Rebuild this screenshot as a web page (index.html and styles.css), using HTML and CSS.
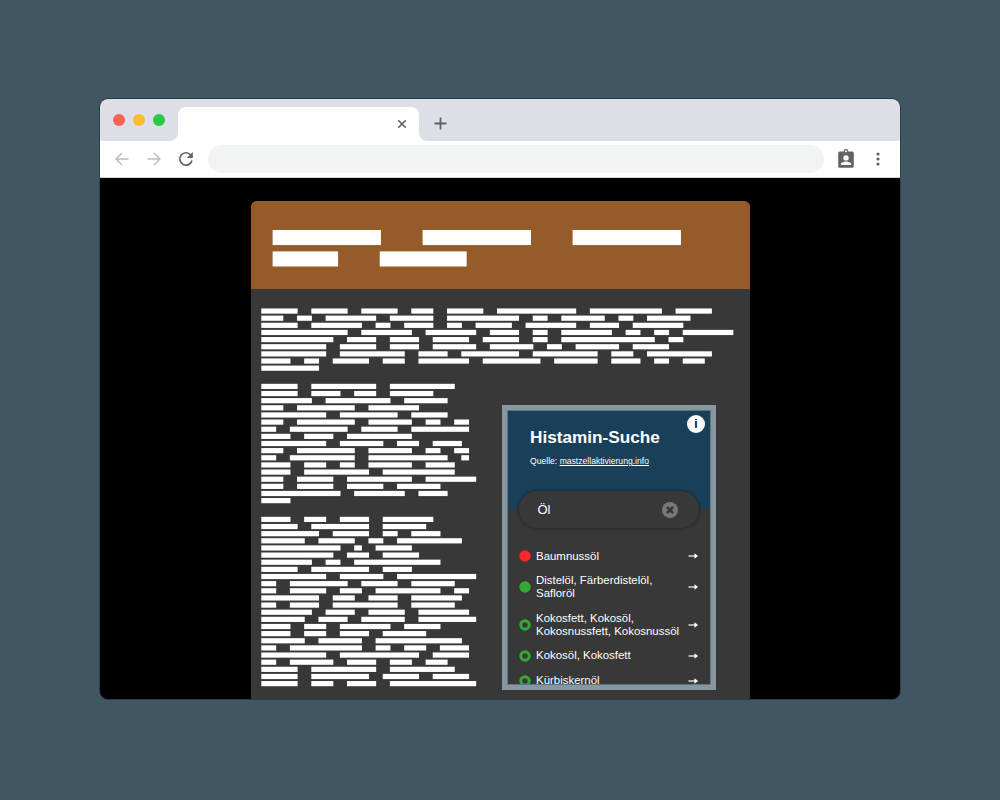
FILE: index.html
```html
<!DOCTYPE html>
<html lang="de">
<head>
<meta charset="utf-8">
<title>Histamin-Suche</title>
<link rel="stylesheet" href="styles.css">
</head>
<body>
<main class="window">
  <div class="tabbar">
    <div class="lights"><i class="light red"></i><i class="light yellow"></i><i class="light green"></i></div>
    <div class="tab"><svg width="10" height="10" viewBox="0 0 10 10"><path d="M1.200 1.200 8.800 8.800M8.800 1.200 1.200 8.800" stroke="#5f6368" stroke-width="1.600"/></svg></div>
    <svg class="plus" width="13" height="13" viewBox="0 0 13 13"><path d="M6.500 .5V12.500M.5 6.500H12.500" stroke="#5f6368" stroke-width="1.800"/></svg>
  </div>
  <div class="toolbar">
    <svg class="back" width="14" height="14" viewBox="0 0 14 14"><path d="M13.500 7H1.500M7 1 1 7l6 6" fill="none" stroke="#babcbe" stroke-width="1.500"/></svg>
    <svg class="forward" width="14" height="14" viewBox="0 0 14 14"><path d="M.5 7h12M7 1l6 6-6 6" fill="none" stroke="#babcbe" stroke-width="1.500"/></svg>
    <svg class="reload" width="16" height="16" viewBox="0 0 16 16"><path d="M12.800 4A6.200 6.200 0 1 0 14 9.600" fill="none" stroke="#5f6368" stroke-width="1.700"/><path d="M14.800 1v6.100H8.700z" fill="#5f6368"/></svg>
    <div class="address"></div>
    <svg class="badge" width="16" height="19" viewBox="0 0 16 19"><path fill="#5f6368" fill-rule="evenodd" d="M1.800 2.400H5.600a2.400 2.400 0 0 1 4.800 0h3.800q1.600 0 1.600 1.600v13.200q0 1.600-1.600 1.600H1.800q-1.600 0-1.600-1.600V4q0-1.600 1.600-1.600zM8 1.200a1.100 1.100 0 1 0 0 2.200a1.100 1.100 0 1 0 0-2.200zM8 6.200a2.700 2.700 0 1 0 0 5.400a2.700 2.700 0 1 0 0-5.400zM2.900 15.900h10.200v-.9c0-1.500-3.200-2.500-5.100-2.500s-5.100 1-5.100 2.500z"/></svg>
    <svg class="menu" width="4" height="14" viewBox="0 0 4 14"><g fill="#5f6368"><circle cx="2" cy="2" r="1.600"/><circle cx="2" cy="7" r="1.600"/><circle cx="2" cy="12" r="1.600"/></g></svg>
  </div>
  <div class="page">
    <article class="card">
      <header class="card-head"><svg class="title-lines" data-lines="title"></svg></header>
      <svg class="para intro" data-lines="intro"></svg>
      <div class="columns">
        <div class="copy">
          <svg class="para first" data-lines="first"></svg>
          <svg class="para second" data-lines="second"></svg>
        </div>
        <aside class="widget">
          <div class="widget-head">
            <h1>Histamin-Suche</h1>
            <p class="source">Quelle: <a>mastzellaktivierung.info</a></p>
            <span class="info">i</span>
          </div>
          <div class="search"><span>Öl</span>
            <svg width="16" height="16" viewBox="0 0 16 16"><circle cx="8" cy="8" r="8" fill="#797979"/><path d="M4.900 4.900l6.200 6.200M11.100 4.900l-6.200 6.200" stroke="#383838" stroke-width="2.600"/></svg>
          </div>
          <ul class="results">
            <li><svg class="dot" viewBox="0 0 12 12"><circle cx="6" cy="6" r="5.700" fill="#fa2828"/></svg><span>Baumnussöl</span><svg class="arrow" viewBox="0 0 10 6"><path d="M.5 3h7" stroke="#fff" stroke-width="1.200"/><path d="M6.500 .3 10 3 6.500 5.700z" fill="#fff"/></svg></li>
            <li><svg class="dot" viewBox="0 0 12 12"><circle cx="6" cy="6" r="5.700" fill="#35a835"/></svg><span>Distelöl, Färberdistelöl,<br>Safloröl</span><svg class="arrow" viewBox="0 0 10 6"><path d="M.5 3h7" stroke="#fff" stroke-width="1.200"/><path d="M6.500 .3 10 3 6.500 5.700z" fill="#fff"/></svg></li>
            <li><svg class="dot" viewBox="0 0 12 12"><circle cx="6" cy="6" r="4.200" fill="none" stroke="#35a835" stroke-width="3"/></svg><span>Kokosfett, Kokosöl,<br>Kokosnussfett, Kokosnussöl</span><svg class="arrow" viewBox="0 0 10 6"><path d="M.5 3h7" stroke="#fff" stroke-width="1.200"/><path d="M6.500 .3 10 3 6.500 5.700z" fill="#fff"/></svg></li>
            <li><svg class="dot" viewBox="0 0 12 12"><circle cx="6" cy="6" r="4.200" fill="none" stroke="#35a835" stroke-width="3"/></svg><span>Kokosöl, Kokosfett</span><svg class="arrow" viewBox="0 0 10 6"><path d="M.5 3h7" stroke="#fff" stroke-width="1.200"/><path d="M6.500 .3 10 3 6.500 5.700z" fill="#fff"/></svg></li>
            <li><svg class="dot" viewBox="0 0 12 12"><circle cx="6" cy="6" r="4.200" fill="none" stroke="#35a835" stroke-width="3"/></svg><span>Kürbiskernöl</span><svg class="arrow" viewBox="0 0 10 6"><path d="M.5 3h7" stroke="#fff" stroke-width="1.200"/><path d="M6.500 .3 10 3 6.500 5.700z" fill="#fff"/></svg></li>
          </ul>
        </aside>
      </div>
    </article>
  </div>
</main>
<script src="lines.js"></script>
</body>
</html>
```
FILE: styles.css
```css
* { box-sizing: border-box; }
body { margin: 0; height: 800px; padding: 99px 100px; background: #405663; overflow: hidden; font-family: "Liberation Sans", Arial, sans-serif; }
svg { display: block; flex: none; }
.window { width: 800px; height: 600px; border-radius: 8px; overflow: hidden; background: #000; box-shadow: 0 0 0 1px #2c3b45; display: flex; flex-direction: column; }
.tabbar { height: 42px; flex: none; background: #dddfe7; display: flex; align-items: flex-start; }
.lights { display: flex; gap: 8px; padding: 15.400px 0 0 13px; width: 78px; }
.light { width: 12px; height: 12px; border-radius: 50%; }
.red { background: #ff5f57; }
.yellow { background: #ffbd2e; }
.green { background: #28ca41; }
.tab { position: relative; width: 241px; height: 34px; margin-top: 8px; background: #fff; border-radius: 8px 8px 0 0; display: flex; align-items: center; justify-content: flex-end; padding-right: 12px; }
.tab::before, .tab::after { content: ""; position: absolute; bottom: 0; width: 8px; height: 8px; }
.tab::before { left: -8px; background: radial-gradient(circle at 0 0, transparent 7.500px, #fff 8.200px); }
.tab::after { right: -8px; background: radial-gradient(circle at 100% 0, transparent 7.500px, #fff 8.200px); }
.plus { margin: 18px 0 0 15px; }
.toolbar { height: 37px; flex: none; background: #fff; display: flex; align-items: center; border-bottom: 1px solid #d4d6d8; }
.back { margin-left: 15px; }
.forward { margin-left: 18px; }
.reload { margin-left: 17px; }
.address { width: 616px; height: 28px; margin-left: 14px; border-radius: 14px; background: #f1f3f4; }
.badge { margin: 0 0 2px 14px; }
.menu { margin-left: 22px; }
.page { flex: 1; min-height: 0; padding: 23px 150px 0 151px; overflow: hidden; }
.card { height: 520px; background: #383838; border-radius: 6px 6px 0 0; overflow: hidden; }
.card-head { height: 88px; background: #955b29; padding: 29px 0 0 21px; }
.title-lines { width: 420px; height: 40px; }
.para { width: 480px; overflow: visible; margin-left: 10px; }
.intro { height: 65px; margin-top: 19px; }
.columns { display: flex; height: 330px; }
.copy { width: 251px; }
.copy .para { width: 220px; }
.first { height: 122px; margin-top: 10px; }
.second { height: 172px; margin-top: 11px; }
.widget { position: relative; width: 214px; height: 285px; margin-top: 32px; border: 5px solid #87979f; background: #383838; overflow: hidden; padding: 1px; }
.widget-head { height: 98px; background: #1a4059; padding: 16px 0 0 22px; color: #fff; }
h1 { margin: 0; font-size: 17.200px; line-height: 20px; }
.source { margin: 9px 0 0; font-size: 8.600px; line-height: 10px; white-space: nowrap; }
.source a { text-decoration: underline; text-underline-offset: 1px; }
.info { position: absolute; right: 6px; top: 5px; width: 18px; height: 18px; border-radius: 50%; background: #fff; color: #111; font: bold 12px/18px "Liberation Sans", Arial, sans-serif; text-align: center; }
.search { position: relative; width: 180px; height: 37px; margin: -18px 0 0 11px; border-radius: 19px; background: #383838; box-shadow: 0 0 4px rgba(0,0,0,.45); display: flex; align-items: center; justify-content: space-between; padding: 0 21px 0 18.500px; color: #fff; font-size: 13px; }
.results { list-style: none; margin: 21.500px 0 0; padding: 0 12px 0 10.500px; color: #fff; font-size: 11.450px; line-height: 12.800px; display: flex; flex-direction: column; gap: 12px; }
.results li { display: flex; align-items: center; }
.results span { flex: 1; white-space: nowrap; }
.dot { width: 12px; height: 12px; margin-right: 5.500px; }
.arrow { width: 10px; height: 6px; }
.widget::after { content: ""; position: absolute; inset: 0; border: 1px solid #5f7580; }
```
FILE: lines.js
```js
// Word lengths per line, in character units; words are two units apart.
const text = {
  title: "5 5 5/3 4",
  intro: "5 5 5 3 5 11 10 5/3 2 7 6 10 2 6 2 6/5 7 2 4 2 5 7 4 7/12 7 7 4 2 7 2 2 7/10 4 4 5 5 2 13 2/9 5 4 6 6 2 6 5/9 9 4 8 9 3 9/4 2 5 3 7 8 6 4 2 3/8",
  first: "5 9 9/5 4 3 6/7 9 6/3 8 7/9 8 5/3 8 6 2 2/2 8 5 8/4 4 9/9 6 3 4/3 8 6 2 2/2 9 11 1/4 3 2 6 4/4 9 10/3 5 9 7/3 5 5 6/11 7 4/4",
  second: "4 3 4 7/5 8 6/8 5 2 4/6 5 2 9/11 1 5/10 3 5/7 2 12/5 8 4/9 6 11/2 8 5 6/2 5 3 9 2/8 3 4 7/2 4 9 6/7 4 5 7/6 4 6 8/4 3 7 5/4 3 4 6/6 6 12/2 10 2 3 4/9 11 5/2 6 4 3 3/5 9 9/5 8 5 5/5 3 4 12"
};
const metrics = {
  title: { x: 0.6, y: 0, unit: 21.43, pitch: 21.4, height: 15.1, extra: 1.2 },
  intro: { x: 0.3, y: 0.45, unit: 7.143, pitch: 7.14, height: 5.2, extra: 0.6 },
  first: { x: 0.3, y: 0.8, unit: 7.143, pitch: 7.14, height: 5.2, extra: 0.6 },
  second: { x: 0.3, y: 0.8, unit: 7.143, pitch: 7.14, height: 5.2, extra: 0.6 }
};
document.querySelectorAll("[data-lines]").forEach(svg => {
  const m = metrics[svg.dataset.lines];
  text[svg.dataset.lines].split("/").forEach((line, row) => {
    let column = 0;
    line.split(" ").map(Number).forEach(length => {
      const bar = document.createElementNS("http://www.w3.org/2000/svg", "rect");
      bar.setAttribute("x", m.x + column * m.unit);
      bar.setAttribute("y", m.y + row * m.pitch);
      bar.setAttribute("width", length * m.unit + m.extra);
      bar.setAttribute("height", m.height);
      bar.setAttribute("fill", "#fff");
      svg.append(bar);
      column += length + 2;
    });
  });
});
```
